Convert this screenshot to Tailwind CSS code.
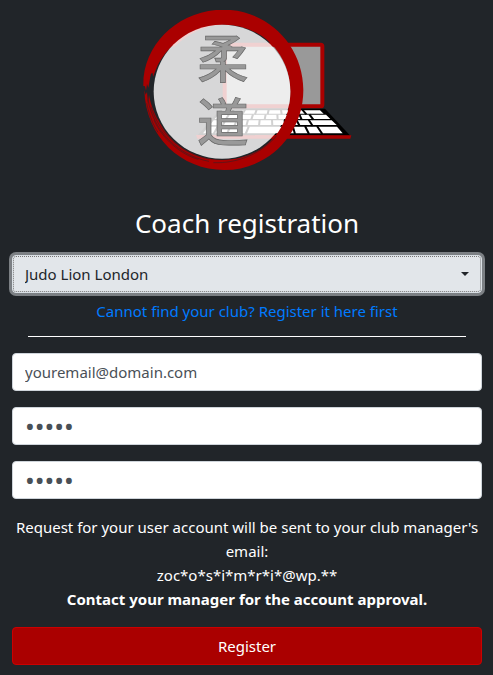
<!DOCTYPE html>
<html lang="en">
<head>
    <meta charset="UTF-8">
    <meta name="viewport" content="width=device-width, initial-scale=1.0">
    <title>Coach registration</title>
    <script src="https://cdn.jsdelivr.net/npm/@tailwindcss/browser@4"></script>
</head>
<body class="min-h-screen bg-[#212529] pt-[10px] pr-[11px] pb-[10px] pl-3 font-['Noto_Sans','Open_Sans',sans-serif] text-[15px] leading-6 text-white">
    <svg class="mx-auto block h-[160px] w-[210px]" viewBox="21 30 630 480" role="img" aria-label="Judo logo">
        <!-- laptop -->
        <rect x="269" y="134" width="293" height="185" rx="5" fill="#999" stroke="#a00" stroke-width="12" />
        <path d="M257 326H570L646 407H187Z" fill="#000" />
        <path d="M183 405L187 416H646L649 406Z" fill="#a00" />
        <path d="M262 331H555L566 341H253ZM250 344H573L586 357H239ZM236 361H590L605 375H225ZM220 380H606L623 400H204Z" fill="#fff" />
        <path d="M296 329L286 343M330 329L322 343M365 329L360 343M401 329L398 343M438 329L440 343M470 329L476 343M502 329L514 343M282 343L272 359M319 343L310 359M354 343L349 359M392 343L389 359M427 343L428 359M460 343L465 359M493 343L500 359M523 343L535 359M272 359L262 378M306 359L298 378M339 359L334 378M374 359L372 378M411 359L412 378M448 359L452 378M484 359L494 378M521 359L533 378M249 378L236 402M286 378L276 402M342 378L332 402M473 378L480 402M510 378L522 402M546 378L562 402" fill="none" stroke="#000" stroke-width="6" />
        <!-- brush circle -->
        <path d="M25 258C22 133 132 29 265 29C399 29 505 136 505 270C505 404 399 510 268 510C139 510 32 411 28 270L32 284L36 276L39 312L42 284C47 315 59 342 70 361C105 432 175 480 262 480C384 480 466 389 466 275C466 163 382 74 265 74C210 74 158 102 118 140L112 138C87 160 72 186 63 208L54 230L53 219L48 221C45 234 42 252 40 263L36 252L33 272L30 259Z" fill="#a00" />
        <path d="M39 299C55 390 127 466 222 484M48 320C72 400 138 461 222 477M57 360C79 414 139 465 190 478M35 310C43 347 54 374 69 397M235 488C310 491 382 459 425 407" fill="none" stroke="#421b21" stroke-width="2" />
        <ellipse cx="261" cy="275" rx="205" ry="201" fill="#fff" fill-opacity=".82" />
        <g font-family="'Noto Sans CJK JP', sans-serif" font-size="154" font-weight="500" text-anchor="middle" fill="#999" stroke="#666" stroke-width="2">
            <text x="264" y="234">柔</text>
            <text x="264" y="422">道</text>
        </g>
    </svg>

    <h1 class="mt-9 text-center text-[26px] leading-[34px]">Coach registration</h1>

    <form class="mt-[15px]">
        <div class="relative">
            <select aria-label="Club" class="block h-[38px] w-full appearance-none rounded border border-[#dae0e5] bg-[#e2e6ea] px-3 text-[#212529] ring-3 ring-[#7c8084] outline-1 -outline-offset-2 outline-dotted outline-[#777]">
                <option>Judo Lion London</option>
            </select>
            <span class="pointer-events-none absolute top-[17px] right-[13px] border-x-4 border-t-4 border-x-transparent border-t-[#212529]"></span>
        </div>
        <p class="mt-[6px] text-center"><a href="#" class="text-[#007bff]">Cannot find your club? Register it here first</a></p>
        <hr class="mx-4 mt-[13px] mb-4 border-t border-white">

        <div class="flex flex-col gap-4">
            <input type="email" aria-label="Email" value="youremail@domain.com" class="h-[38px] w-full rounded border border-[#ced4da] bg-white px-3 text-[#495057]">
            <input type="password" aria-label="Password" value="coach" class="h-[38px] w-full rounded border border-[#ced4da] bg-white px-3 text-[26px] text-[#495057]">
            <input type="password" aria-label="Repeat password" value="coach" class="h-[38px] w-full rounded border border-[#ced4da] bg-white px-3 text-[26px] text-[#495057]">
        </div>

        <p class="my-4 text-center">
            Request for your user account will be sent to your club manager's email:<br>
            zoc*o*s*i*m*r*i*@wp.**<br>
            <b>Contact your manager for the account approval.</b>
        </p>

        <button type="submit" class="block h-[38px] w-full rounded border border-[#c00] bg-[#a00] text-white">Register</button>
    </form>
</body>
</html>
